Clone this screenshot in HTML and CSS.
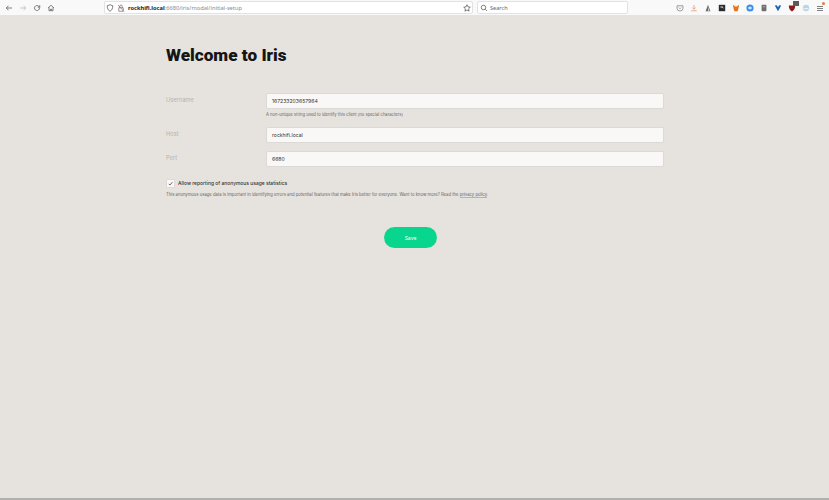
FILE: index.html
```html
<!DOCTYPE html>
<html>
<head>
  <title>Welcome to Iris</title>
  <link rel="stylesheet" href="styles.css">
</head>
<body>
<div class="toolbar">
  <div class="nav">
    <svg class="ico" viewBox="0 0 16 16"><path d="M14 8H3M7 3.500L2.500 8 7 12.500"/></svg>
    <svg class="ico dim" viewBox="0 0 16 16"><path d="M2 8h11M9 3.500L13.500 8 9 12.500"/></svg>
    <svg class="ico" viewBox="0 0 16 16"><path d="M13 8a5 5 0 1 1-1.500-3.500L13.500 6.500M13.500 2.500v4h-4"/></svg>
    <svg class="ico" viewBox="0 0 16 16"><path d="M2 8l6-5.500L14 8M4 7v6.500h3v-3h2v3h3V7"/></svg>
  </div>
  <div class="urlbar">
    <svg class="ico shield" viewBox="0 0 16 16"><path d="M8 1.500l5.500 2c0 5-1.500 9-5.500 11-4-2-5.500-6-5.500-11z"/></svg>
    <svg class="ico lock" viewBox="0 0 16 16"><path d="M3.500 7.500h9v7h-9zM5.500 7.500V4.500a2.500 2.500 0 0 1 5 0v3"/><path class="strike" d="M2 2l12 13"/></svg>
    <span class="host">rockhifi.local</span><span class="path">:6680/iris/modal/initial-setup</span>
    <svg class="ico star" viewBox="0 0 16 16"><path d="M8 1.500l2 4.300 4.600.6-3.400 3.200.9 4.700L8 12l-4.100 2.300.9-4.700L1.400 6.400 6 5.800z"/></svg>
  </div>
  <div class="searchbar">
    <svg class="ico" viewBox="0 0 16 16"><path d="M10.500 10.500L14 14"/><circle cx="7" cy="7" r="4.500"/></svg>
    <span>Search</span>
  </div>
  <div class="addons">
    <svg class="ico pocket" viewBox="0 0 16 16"><path d="M2 3.500h12v5a6 5.500 0 0 1-12 0zM5.500 7L8 9.500 10.500 7"/></svg>
    <svg class="ico dl" viewBox="0 0 16 16"><path d="M8 2v8M4.500 7L8 10.500 11.500 7M2.500 13.500h11"/></svg>
    <svg class="ext" viewBox="0 0 10 10"><path fill="#666" d="M5 1L8 9H2z"/><path fill="#c9c9c9" d="M5 3l2 6H5z"/></svg>
    <svg class="ext" viewBox="0 0 10 10"><rect x="1" y="1" width="8" height="8" fill="#2b2b2b"/><path fill="#ddd" d="M3 3h3l1 3-2-1.500H3z"/></svg>
    <svg class="ext" viewBox="0 0 10 10"><path fill="#e2761b" d="M1 1l3 2h2l3-2-1 5-1 3H3L2 6z"/></svg>
    <svg class="ext" viewBox="0 0 10 10"><circle cx="5" cy="5" r="4.500" fill="#3b8fe8"/><rect x="3" y="3.500" width="4" height="3" rx="1" fill="#d5e8fb"/></svg>
    <svg class="ext" viewBox="0 0 10 10"><rect x="2" y="1" width="6" height="8" rx="1" fill="#6f6f6f"/><rect x="3.500" y="3" width="3" height="1" fill="#bbb"/></svg>
    <svg class="ext" viewBox="0 0 10 10"><path fill="#1466b8" d="M1 2l2.500-.5L5 4l1.500-2.500L9 2 5 9z"/></svg>
    <div class="ext-badged">
      <svg class="ext" viewBox="0 0 10 10"><path fill="#8c1c1c" d="M1 2h8c0 4-1.500 6-4 7.500C2.500 8 1 6 1 2z"/></svg>
      <span class="badge"></span>
    </div>
    <svg class="ext" viewBox="0 0 10 10"><circle cx="5" cy="5" r="4" fill="#b9d6e6"/><path fill="#e8eef1" d="M2 5h6v1.500H2z"/></svg>
    <div class="ext-badged">
      <svg class="ico menu" viewBox="0 0 16 16"><path d="M2 5h12M2 9h12M2 13h12"/></svg>
      <span class="dot"></span>
    </div>
  </div>
</div>

<div class="page">
  <div class="setup">
    <h1>Welcome to Iris</h1>

    <div class="field first">
      <div class="name">Username</div>
      <div class="input-col">
        <div class="input">167233203657964</div>
        <div class="hint">A non-unique string used to identify this client (no special characters)</div>
      </div>
    </div>
    <div class="field">
      <div class="name">Host</div>
      <div class="input-col"><div class="input">rockhifi.local</div></div>
    </div>
    <div class="field">
      <div class="name">Port</div>
      <div class="input-col"><div class="input">6680</div></div>
    </div>

    <div class="allow">
      <span class="check"><svg viewBox="0 0 10 10"><path d="M2.500 5.500L4.200 7.200 7.800 3"/></svg></span>
      <span>Allow reporting of anonymous usage statistics</span>
    </div>
    <p class="note">This anonymous usage data is important in identifying errors and potential features that make Iris better for everyone. Want to know more? Read the <a>privacy policy</a>.</p>

    <div class="actions"><button class="save">Save</button></div>
  </div>
</div>
<div class="bottom"></div>
</body>
</html>
```

FILE: styles.css
```css
html, body{
  margin:0;
  height:100%;
}

body{
  display:flex;
  flex-direction:column;
  height:500px;
  overflow:hidden;
  background:#e6e3de;
  font-family:Inter, "Liberation Sans", sans-serif;
  color:#222;
}

.toolbar{
  display:flex;
  align-items:center;
  height:15px;
  flex:none;
  background:#f9f9fa;
  font-family:"Noto Sans", sans-serif;
}

.ico{
  width:8px;
  height:8px;
  fill:none;
  stroke:#4a4a4f;
  stroke-width:1.400;
  flex:none;
}

.dim{
  stroke:#b5b5b8;
}

.nav{
  display:flex;
  align-items:center;
  gap:6px;
  width:104px;
  padding-left:5px;
  box-sizing:border-box;
  flex:none;
}

.urlbar, .searchbar{
  display:flex;
  align-items:center;
  height:13px;
  box-sizing:border-box;
  background:#fff;
  border:1px solid #e2e2e4;
  border-radius:2px;
  font-size:5.700px;
}

.urlbar{
  width:369px;
  margin-right:4px;
  padding:0 1px;
  flex:none;
}

.shield{
  margin-right:3px;
}

.lock{
  stroke:#6b6b6b;
  margin-right:3px;
}

.strike{
  stroke:#c9504a;
}

.host{
  color:#222;
  font-weight:bold;
}

.path{
  color:#8b8b8f;
}

.star{
  margin-left:auto;
}

.searchbar{
  width:151px;
  padding:0 2px;
  gap:2px;
  color:#66666a;
  font-size:5.600px;
  flex:none;
}

.addons{
  display:flex;
  align-items:center;
  gap:6px;
  margin-left:auto;
  padding-right:5px;
}

.ext{
  display:block;
  width:8px;
  height:8px;
  flex:none;
}

.pocket{
  stroke:#777;
}

.dl{
  stroke:#d98a6a;
}

.ext-badged{
  position:relative;
  display:flex;
}

.badge{
  position:absolute;
  top:-3px;
  right:-3px;
  width:6px;
  height:5px;
  background:#5c5c5c;
}

.dot{
  position:absolute;
  top:-2px;
  right:-1px;
  width:3px;
  height:3px;
  border-radius:50%;
  background:#e8793a;
}

.page{
  flex:1;
  padding-left:166px;
}

.setup{
  width:498px;
}

h1{
  margin:30px 0 0;
  font-family:Roboto, "Liberation Sans", sans-serif;
  font-size:17.200px;
  line-height:20px;
  font-weight:900;
  color:#151515;
}

.field{
  display:flex;
  margin-bottom:8px;
}

.field.first{
  margin-top:28px;
}

.name{
  width:100px;
  flex:none;
  padding-top:1px;
  font-size:5.700px;
  line-height:11px;
  color:#b3b3b0;
}

.input-col{
  flex:1;
}

.input{
  height:16px;
  box-sizing:border-box;
  padding:0 5px;
  background:#f9f8f6;
  border:1px solid #dcdad6;
  border-radius:2px;
  font-size:5.100px;
  line-height:14px;
  color:#333;
}

.hint{
  margin-top:3px;
  margin-bottom:1px;
  font-size:4.170px;
  line-height:6px;
  color:#666;
}

.allow{
  display:flex;
  align-items:center;
  gap:3px;
  margin-top:12px;
  font-size:4.950px;
  line-height:9px;
  font-weight:500;
  color:#333;
}

.check{
  display:block;
  width:9px;
  height:9px;
  box-sizing:border-box;
  background:#f9f8f6;
  border:1px solid #dcdad6;
  border-radius:1px;
}

.check svg{
  display:block;
  fill:none;
  stroke:#333;
  stroke-width:1;
}

.note{
  margin:4px 0 0;
  font-size:4.200px;
  line-height:6px;
  color:#666;
}

.note a{
  border-bottom:1px solid #b5b3af;
}

.actions{
  display:flex;
  justify-content:center;
  margin-top:29px;
  padding-right:9px;
}

.save{
  width:53px;
  height:21px;
  padding:0;
  border:0;
  border-radius:11px;
  background:#09d68e;
  color:#f2f6f2;
  font-family:inherit;
  font-size:5px;
  font-weight:500;
}

.bottom{
  height:2px;
  flex:none;
  background:#b0b0ae;
}
```
